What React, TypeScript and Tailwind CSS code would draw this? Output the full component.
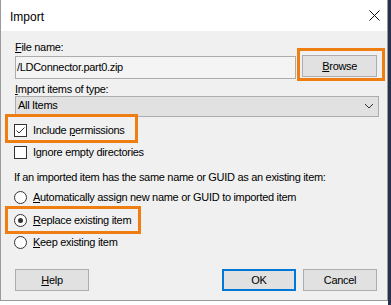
import React from "react";

const font = { fontFamily: '"Liberation Sans", Arial, sans-serif' };

function Check() {
  return (
    <div className="w-[13px] h-[13px] border border-[#333333] bg-white flex items-center justify-center shrink-0">
      <svg width="11" height="11" viewBox="0 0 11 11">
        <path d="M1.5 5.5 L4 8 L9.5 2.5" fill="none" stroke="#333" strokeWidth="1" />
      </svg>
    </div>
  );
}

function Box() {
  return <div className="w-[13px] h-[13px] border border-[#333333] bg-white shrink-0" />;
}

function Radio({ on }: { on?: boolean }) {
  return (
    <div className="w-[13px] h-[13px] rounded-full border border-[#333333] bg-white flex items-center justify-center shrink-0">
      {on && <div className="w-[5px] h-[5px] rounded-full bg-[#333333]" />}
    </div>
  );
}

export default function App() {
  return (
    <div className="w-[391px] h-[305px] bg-white flex overflow-hidden" style={font}>
      <div className="relative w-[388px] h-[301px] flex flex-col border-l border-r border-b border-[#9a9a9a] text-[11px] leading-[13px] tracking-[-0.3px] text-black">
        {/* title bar */}
        <div className="h-[31px] bg-white flex justify-between shrink-0">
          <div className="pl-[9px] mt-[10px] text-[12px] leading-[14px] tracking-normal">Import</div>
          <div className="pr-[7px] pt-[10px]">
            <svg width="11" height="11" viewBox="0 0 11 11">
              <path d="M0.5 0.5 L10.5 10.5 M10.5 0.5 L0.5 10.5" stroke="#111" strokeWidth="1" />
            </svg>
          </div>
        </div>
        {/* body */}
        <div className="flex-1 bg-[#f0f0f0] flex flex-col pl-[13px] pr-[10px]">
          <div className="mt-[10px] pl-[1px]">
            <u>F</u>ile name:
          </div>
          <div className="mt-[1px] h-[24px] flex items-start pl-[1px]">
            <div className="mt-[1px] w-[283px] h-[23px] border border-[#acacac] bg-[#f4f4f4] pl-[1px] pt-[4px]">
              /LDConnector.part0.zip
            </div>
            <div className="ml-[6px] w-[75px] h-[22px] border border-[#adadad] bg-[#e1e1e1] flex items-center justify-center">
              <span><u>B</u>rowse</span>
            </div>
          </div>
          <div className="mt-[4px] pl-[1px]">
            <u>I</u>mport items of type:
          </div>
          <div className="ml-[1px] w-[364px] h-[21px] border border-[#adadad] bg-[#e1e1e1] flex items-start justify-between pl-[2px] pr-[4px] pt-[2px]">
            <span>All Items</span>
            <svg width="10" height="10" viewBox="0 0 10 10" className="mt-[2px]">
              <path d="M1 3 L5 7 L9 3" fill="none" stroke="#333" strokeWidth="1" />
            </svg>
          </div>
          <div className="mt-[6px] h-[15px] flex items-center gap-[6px]">
            <Check />
            <span>
              Include <u>p</u>ermissions
            </span>
          </div>
          <div className="mt-[7px] h-[15px] flex items-center gap-[6px]">
            <Box />
            <span>
              I<u>g</u>nore empty directories
            </span>
          </div>
          <div className="mt-[11px]">If an imported item has the same name or GUID as an existing item:</div>
          <div className="mt-[6px] h-[15px] flex items-center gap-[6px]">
            <Radio />
            <span>
              <u>A</u>utomatically assign new name or GUID to imported item
            </span>
          </div>
          <div className="mt-[8px] h-[15px] flex items-center gap-[6px]">
            <Radio on />
            <span>
              <u>R</u>eplace existing item
            </span>
          </div>
          <div className="mt-[7px] h-[15px] flex items-center gap-[6px]">
            <Radio />
            <span>
              <u>K</u>eep existing item
            </span>
          </div>
          <div className="mt-[19px] flex pl-[1px]">
            <div className="w-[74px] h-[22px] border border-[#adadad] bg-[#e1e1e1] flex items-center justify-center">
              <span>
                <u>H</u>elp
              </span>
            </div>
            <div className="ml-auto w-[74px] h-[22px] border-2 border-[#0078d7] bg-[#e1e1e1] flex items-center justify-center">
              OK
            </div>
            <div className="ml-[7px] w-[74px] h-[22px] border border-[#adadad] bg-[#e1e1e1] flex items-center justify-center">
              Cancel
            </div>
          </div>
        </div>
        {/* annotation highlights */}
        <div className="absolute left-[296px] top-[48px] w-[88px] h-[33px] border-[3px] border-[#ee7d12]" />
        <div className="absolute left-[4px] top-[114px] w-[133px] h-[29px] border-[3px] border-[#ee7d12]" />
        <div className="absolute left-[4px] top-[206px] w-[136px] h-[28px] border-[3px] border-[#ee7d12]" />
      </div>
      <div className="w-[3px] h-[305px] bg-[#26324c]" />
    </div>
  );
}
